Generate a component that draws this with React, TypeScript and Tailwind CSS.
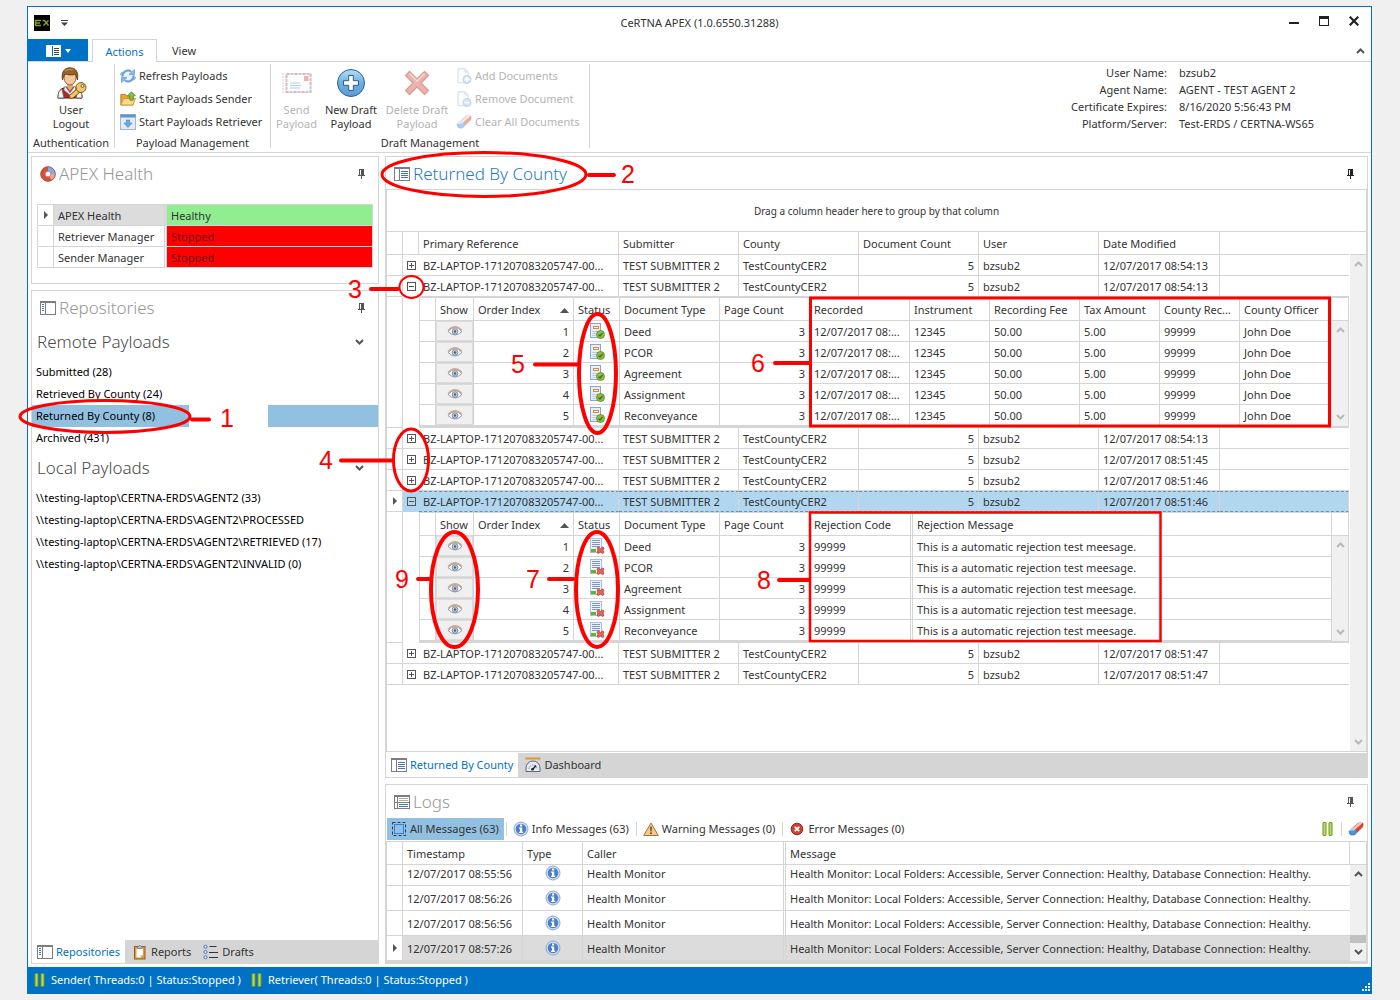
import type { ReactNode } from 'react'
import * as React from 'react'
import clsx from 'clsx'

type IconProps = { className?: string }

const UserKeyIcon = () => (
  <svg viewBox="0 0 32 32" className="size-8">
    <path d="M3 31c0-7 3-10 9-11h6c6 1 9 4 9 11z" fill="#b5242c" stroke="#4a1d16" />
    <path d="M3 31c0-5 1-8 4-9l2 9zM27 31c0-5-1-8-4-9l-2 9z" fill="#f1f1ee" stroke="#555" strokeWidth=".8" />
    <path d="M10 19l5 7 5-7 1 4-6 5-6-5z" fill="#fff" stroke="#888" strokeWidth=".7" />
    <path d="M12 15h6v5l-3 4-3-4z" fill="#e2ab78" />
    <ellipse cx="15" cy="10.500" rx="6" ry="7.500" fill="#f3c797" stroke="#7a4a22" strokeWidth=".8" />
    <path d="M7.500 13C6 4 10 .8 15 .8S24 4 22.500 13c-.8-2-1.200-4-2-6-3 1.500-7 1-10.500 0-1 2-1.800 3-2.500 6z" fill="#9a612a" stroke="#54300f" strokeWidth=".8" />
    <path d="M10 4q4-2.500 8-1" fill="none" stroke="#c98f4e" strokeWidth="1.300" />
    <g stroke="#6f4a10" strokeWidth=".9" fill="#f2c766">
      <path d="M22 22l3 3-7 6-3 .5-.5-3z" />
      <circle cx="26" cy="20.500" r="5" />
      <circle cx="27.500" cy="19" r="1.500" fill="#fff" />
    </g>
  </svg>
)

const RefreshIcon = () => (
  <svg viewBox="0 0 16 16" className="size-4">
    <circle cx="8" cy="8" r="6" fill="#e6f1fb" stroke="#a9c8e6" />
    <path d="M2.500 8.500A5.500 5.500 0 0 1 11 3.500M13.500 7.500A5.500 5.500 0 0 1 5 12.500" fill="none" stroke="#6d9fd0" strokeWidth="2" />
    <path d="M9 6.500h5.500V1.500zM7 9.500H1.500v5z" fill="#8bb8e4" stroke="#5a8dc2" strokeWidth=".6" />
    <path d="M0 7l2.500-3M16 9l-2.500 3" stroke="#8bb8e4" strokeWidth="1.600" />
  </svg>
)

const FolderUpIcon = () => (
  <svg viewBox="0 0 16 16" className="size-4">
    <path d="M.8 14V3.500h5l1.400 1.500h6V14z" fill="#e9a33a" stroke="#b8741a" strokeWidth=".8" />
    <path d="M.8 14L3.500 7.500h12L13 14z" fill="#fbd987" stroke="#c98c2b" strokeWidth=".8" />
    <path d="M11.500.8l4 4h-2.300v4.400H9.800V4.800H7.500z" fill="#7cc242" stroke="#4b8a1e" strokeWidth=".7" />
  </svg>
)

const WindowDownIcon = () => (
  <svg viewBox="0 0 16 16" className="size-4">
    <rect x=".5" y=".5" width="15" height="15" fill="#e3ebf6" stroke="#a3b6d1" />
    <rect x=".5" y=".5" width="15" height="3" fill="#5f92d2" />
    <path d="M6.500 6h3v3H12l-4 4.500L4 9h2.500z" fill="#6aaee0" stroke="#3c7fb9" strokeWidth=".6" />
  </svg>
)

const EnvelopeIcon = () => (
  <svg viewBox="0 0 32 32" className="size-8 opacity-45">
    <path d="M1 7h2M1 10h2M1 13h2M1 16h2M1 19h2M1 22h2M1 25h2" stroke="#8b95a5" />
    <rect x="5" y="6.500" width="25" height="19" fill="#f8f9fc" stroke="#b9c2d2" />
    <rect x="5.500" y="7" width="24" height="18" fill="none" stroke="#d8563f" strokeWidth="2" strokeDasharray="3 5" />
    <rect x="5.500" y="7" width="24" height="18" fill="none" stroke="#6f93c9" strokeWidth="2" strokeDasharray="3 5" strokeDashoffset="4" />
    <rect x="23" y="9" width="4.500" height="5" fill="#d9583f" />
    <path d="M9 16h10M9 18.500h11M9 21h10" stroke="#6f93c9" />
  </svg>
)

const NewDraftIcon = () => (
  <svg viewBox="0 0 32 32" className="size-8">
    <defs>
      <linearGradient id="draft" x1="0" y1="0" x2="0" y2="1">
        <stop offset="0" stopColor="#b4e0f5" />
        <stop offset=".5" stopColor="#6cafe0" />
        <stop offset="1" stopColor="#5a9cd6" />
      </linearGradient>
    </defs>
    <circle cx="16" cy="16" r="13.500" fill="url(#draft)" stroke="#2f5c93" />
    <path d="M13.700 8.500h4.600v5.200h5.200v4.600h-5.200v5.200h-4.600v-5.200H8.500v-4.600h5.200z" fill="#fff" stroke="#2f5c93" />
  </svg>
)

const DeleteDraftIcon = () => (
  <svg viewBox="0 0 32 32" className="size-8">
    <path d="M8.500 4.500L16 12l7.500-7.500 4 4L20 16l7.500 7.500-4 4L16 20l-7.500 7.500-4-4L12 16 4.500 8.500z" fill="#eab4ae" stroke="#dc9a94" strokeWidth="1.200" strokeLinejoin="round" />
    <path d="M8.500 6.500l7.500 7.500 7.500-7.500" fill="none" stroke="#f8d8d3" strokeWidth="1.500" />
  </svg>
)

const DocIcon = ({ minus }: { minus?: boolean }) => (
  <svg viewBox="0 0 16 16" className="size-4 opacity-40">
    <path d="M2 .8h7l3 3v11H2z" fill="#f4f8fd" stroke="#93aaca" />
    <path d="M9 .8v3h3" fill="none" stroke="#93aaca" />
    <circle cx="11" cy="11.500" r="4" fill="#9bbfe6" stroke="#5f8fc6" />
    <path d={minus ? 'M8.500 11.500h5' : 'M8.500 11.500h5M11 9v5'} stroke="#fff" strokeWidth="1.500" />
  </svg>
)

const EraserIcon = ({ className }: IconProps) => (
  <svg viewBox="0 0 16 16" className={clsx('size-4', className)}>
    <path d="M1 10.500L5 6.500l5 4-3.500 3.500H3q-2-1-2-3.500z" fill="#4d8fdc" stroke="#2a65b0" strokeWidth=".6" />
    <path d="M5 6.500L10.500 2h4.300q.8 2-.3 4L10 10.500z" fill="#d9452f" stroke="#a8341f" strokeWidth=".6" />
    <path d="M2 9.500L10.500 2h4L6 9.500z" fill="#f6cdbf" />
    <path d="M2 9.500l3-3 2 2-1 1z" fill="#a9cdf5" />
  </svg>
)

const GaugeRingIcon = () => (
  <svg viewBox="0 0 16 16" className="size-4">
    <circle cx="8" cy="8" r="5" fill="none" stroke="#d4513d" strokeWidth="5" />
    <path d="M8 3A5 5 0 0 1 13 8" fill="none" stroke="#7fb0e6" strokeWidth="5" />
    <path d="M13 8A5 5 0 0 1 10.500 12.300" fill="none" stroke="#eda58f" strokeWidth="5" />
    <circle cx="8" cy="8" r="7.300" fill="none" stroke="#8c4a44" strokeWidth=".7" />
    <circle cx="8" cy="8" r="2.800" fill="#fff" stroke="#9a5a50" strokeWidth=".6" />
  </svg>
)

// side: which part of the pane carries the blue lines
const PaneIcon = ({ side }: { side: 'left' | 'right' | 'full' }) => (
  <svg viewBox="0 0 16 14" className="h-3.5 w-4" shapeRendering="crispEdges">
    <path d="M0 0h16v14H0zM1 2v11h4V2zM6 2v11h9V2z" fill="#7d7d7d" fillRule="evenodd" />
    {side === 'left' && <path d="M2 3.500h2M2 5.500h2M2 7.500h2M2 9.500h2" stroke="#3f78b5" />}
    {side === 'right' && <path d="M7 4.500h7M7 6.500h7M7 8.500h7M7 10.500h7" stroke="#3f78b5" />}
    {side === 'full' && (
      <>
        <path d="M4 2h11v11H4z" fill="#fff" />
        <path d="M3.500 2v11" stroke="#7d7d7d" />
        <path d="M5 3.500h9M5 5.500h9" stroke="#aaa" />
        <path d="M1 7.500h14" stroke="#7d7d7d" />
        <path d="M5 9.500h9M5 11.500h9" stroke="#3f78b5" />
      </>
    )}
  </svg>
)

const PinIcon = ({ className }: IconProps) => (
  <svg viewBox="0 0 7 10" className={clsx('h-2.5 w-[7px]', className)} shapeRendering="crispEdges">
    <path d="M1 0h5v6h1v1H4v3H3V7H0V6h1zM2 1v5h1V1z" fill="currentColor" fillRule="evenodd" />
  </svg>
)

const Chevron = ({ up, className }: IconProps & { up?: boolean }) => (
  <svg viewBox="0 0 9 6" className={clsx('h-1.5 w-[9px]', className)}>
    <path d={up ? 'M1 5l3.500-3.500L8 5' : 'M1 1l3.500 3.500L8 1'} fill="none" stroke="currentColor" strokeWidth="2" />
  </svg>
)

const EyeIcon = () => (
  <svg viewBox="0 0 16 12" className="h-3 w-4">
    <path d="M1 6.500q7-8 14 0-7 7-14 0z" fill="#f6f8fa" stroke="#8fa1b5" strokeWidth="1" />
    <path d="M1 5.500q7-7.500 14 0" fill="none" stroke="#cda88f" strokeWidth="1.300" />
    <circle cx="8" cy="6.500" r="2.800" fill="#c3d0dc" stroke="#74889d" strokeWidth=".9" />
    <circle cx="8" cy="6.500" r="1.200" fill="#55616e" />
  </svg>
)

const AcceptedIcon = () => (
  <svg viewBox="0 0 16 16" className="size-4">
    <rect x="1.500" y=".5" width="10" height="14" fill="#e8effb" stroke="#8ba4d8" />
    <rect x="4.500" y="3.500" width="5" height="2" fill="#fff" stroke="#d98a33" />
    <path d="M3.500 8.500h6M3.500 10.500h4M3.500 12.500h3" stroke="#b4c4e4" />
    <circle cx="11.500" cy="11.500" r="4" fill="#8cc044" stroke="#568a20" strokeWidth=".8" />
    <path d="M9.500 11.500l1.500 1.500 2.500-3" fill="none" stroke="#3f6a18" strokeWidth="1.200" />
  </svg>
)

const RejectedIcon = () => (
  <svg viewBox="0 0 16 16" className="size-4">
    <rect x="1.500" y=".5" width="11" height="14" fill="#eef3fc" stroke="#a9bce2" />
    <path d="M3 2.500h8M3 4.500h8M3 6.500h8M3 8.500h8" stroke="#7f94c6" />
    <rect x="2" y="11" width="5" height="3" fill="#63b32c" />
    <path d="M8 10l1.500-1 2 1.500 2-1.500 1.500 1-1 2 1 2.500-1.500 1-2-1.500-2 1.500-1.500-1 1-2.500z" fill="#e0675c" stroke="#b8382d" strokeWidth=".8" />
  </svg>
)

const InfoIcon = () => (
  <svg viewBox="0 0 16 16" className="size-4">
    <circle cx="8" cy="8" r="7" fill="#d3e0f3" stroke="#8fa9d0" />
    <circle cx="8" cy="8" r="5.300" fill="#4c7fc8" />
    <path d="M7 3.500h2.200v2H7zM6 6.500h3.200v4.300h1V12H6v-1.200h1V7.700H6z" fill="#fff" />
  </svg>
)

const WarningIcon = () => (
  <svg viewBox="0 0 16 16" className="size-4">
    <path d="M8 2l7.300 12.500H.7z" fill="#f5c98a" stroke="#a9713a" strokeLinejoin="round" />
    <path d="M7.200 5.800h1.600l-.3 4.700h-1zM7.200 11.500h1.600v1.500H7.200z" fill="#4a3520" />
  </svg>
)

const ErrorIcon = () => (
  <svg viewBox="0 0 16 16" className="size-4">
    <circle cx="8" cy="8" r="5.800" fill="#cf3f35" stroke="#8f2820" />
    <path d="M5.800 5.800l4.400 4.400M10.200 5.800l-4.400 4.400" stroke="#fff" strokeWidth="1.800" />
  </svg>
)

const SelectAllIcon = () => (
  <svg viewBox="0 0 16 16" className="size-4">
    <rect x="1.500" y="1.500" width="13" height="13" fill="none" stroke="#1f3c62" strokeDasharray="3 2" />
    <rect x="3.500" y="3.500" width="9" height="9" fill="#8fc0f2" stroke="#3f7fc4" />
  </svg>
)

const DashboardIcon = () => (
  <svg viewBox="0 0 16 16" className="size-4">
    <path d="M.5 1.500h15" stroke="#e59430" strokeWidth="2" />
    <path d="M1 14.500V11a7 7 0 0 1 14 0v3.500z" fill="#e6ebf2" stroke="#5a6980" />
    <path d="M4 12a4 4 0 0 1 8 0" fill="none" stroke="#7d8ca3" strokeDasharray="1.500 1" />
    <path d="M7.500 12.500L11 8.500" stroke="#222" strokeWidth="1.500" />
    <circle cx="7.500" cy="12.300" r="1.300" fill="#222" />
  </svg>
)

const ReportsIcon = () => (
  <svg viewBox="0 0 16 16" className="size-4">
    <rect x="2.500" y="2.500" width="10.500" height="12.500" fill="#e09a3c" stroke="#9c5d18" />
    <path d="M4.500 4.500h6.500v6.500l-2.500 2.500h-4z" fill="#fff" />
    <path d="M5.500 4.500V2.500h1.200Q7.800-.2 8.900 2.500H10v2z" fill="#b9c6d8" stroke="#5a6c88" strokeWidth=".7" />
    <path d="M8.500 13.500V11H11z" fill="#b9c6d8" />
  </svg>
)

const DraftsIcon = () => (
  <svg viewBox="0 0 16 16" className="size-4">
    <g fill="#d6e6f7" stroke="#4a7db8">
      <circle cx="2.500" cy="2.800" r="1.600" />
      <circle cx="2.500" cy="8" r="1.600" />
      <circle cx="2.500" cy="13.200" r="1.600" />
    </g>
    <path d="M6.500 2.500h7M6 8.500h9M6 13.500h9" stroke="#333" />
  </svg>
)

const PauseIcon = () => (
  <svg viewBox="0 0 12 14" className="h-3.5 w-3">
    <rect x="1" y=".5" width="3" height="13" rx=".5" fill="#b9db5c" stroke="#6a9420" />
    <rect x="7" y=".5" width="3" height="13" rx=".5" fill="#b9db5c" stroke="#6a9420" />
  </svg>
)

const RowMarker = () => (
  <svg viewBox="0 0 4 8" className="mx-auto h-2 w-1">
    <path d="M0 0l4 4-4 4z" fill="#555" />
  </svg>
)

const SmallCommand = ({ icon, label, disabled }: { icon: ReactNode, label: string, disabled?: boolean }) => (
  <button type="button" disabled={disabled} className="flex h-[23px] items-center gap-[3px] disabled:text-[#b4b4b4]">
    {icon}
    {label}
  </button>
)

const BigCommand = ({ icon, lines, disabled, className }: { icon: ReactNode, lines: string[], disabled?: boolean, className?: string }) => (
  <button type="button" disabled={disabled} className={clsx('flex flex-col items-center pt-[3px] leading-[14px] disabled:text-[#b4b4b4]', className)}>
    <span className="mb-1">{icon}</span>
    {lines.map(line => <span key={line}>{line}</span>)}
  </button>
)

const Ribbon = () => (
  <div className="flex h-[91px] shrink-0 justify-between border-b border-[#d5d5d5] pt-0.5 pb-1">
    <div className="flex">
      <section className="flex w-[87px] flex-col items-center border-r border-[#d5d5d5] whitespace-nowrap">
        <BigCommand icon={<UserKeyIcon />} lines={['User', 'Logout']} />
        <span className="mt-auto leading-[10px]">Authentication</span>
      </section>
      <section className="flex w-[156px] flex-col border-r border-[#d5d5d5] pl-[5px] whitespace-nowrap">
        <div className="flex flex-col">
          <SmallCommand icon={<RefreshIcon />} label="Refresh Payloads" />
          <SmallCommand icon={<FolderUpIcon />} label="Start Payloads Sender" />
          <SmallCommand icon={<WindowDownIcon />} label="Start Payloads Retriever" />
        </div>
        <span className="mt-auto self-center pr-[5px] leading-[10px]">Payload Management</span>
      </section>
      <section className="flex w-[319px] flex-col border-r border-[#d5d5d5] whitespace-nowrap">
        <div className="flex">
          <BigCommand disabled icon={<EnvelopeIcon />} lines={['Send', 'Payload']} className="w-[51px]" />
          <BigCommand icon={<NewDraftIcon />} lines={['New Draft', 'Payload']} className="w-[58px]" />
          <BigCommand disabled icon={<DeleteDraftIcon />} lines={['Delete Draft', 'Payload']} className="w-[74px]" />
          <div className="flex flex-col pl-0.5">
            <SmallCommand disabled icon={<DocIcon />} label="Add Documents" />
            <SmallCommand disabled icon={<DocIcon minus />} label="Remove Document" />
            <SmallCommand disabled icon={<EraserIcon className="opacity-45" />} label="Clear All Documents" />
          </div>
        </div>
        <span className="mt-auto self-center leading-[10px]">Draft Management</span>
      </section>
    </div>
    <dl className="mr-10 grid auto-rows-[17px] grid-cols-[auto_152px] content-start gap-x-3 leading-[17px]">
      {[
        ['User Name:', 'bzsub2'],
        ['Agent Name:', 'AGENT - TEST AGENT 2'],
        ['Certificate Expires:', '8/16/2020 5:56:43 PM'],
        ['Platform/Server:', 'Test-ERDS / CERTNA-WS65'],
      ].map(([label, value]) => (
        <React.Fragment key={label}>
          <dt className="text-right">{label}</dt>
          <dd>{value}</dd>
        </React.Fragment>
      ))}
    </dl>
  </div>
)

const lightHeading = 'font-[\'Open_Sans\',\'Noto_Sans\',sans-serif] text-[17px] leading-6 font-light'

const PanelTitle = ({ icon, title, active }: { icon: ReactNode, title: string, active?: boolean }) => (
  <div className="flex h-8 shrink-0 items-center pt-0.5 pr-[13px] pl-2">
    {icon}
    <h2 className={clsx(lightHeading, 'ml-[3px]', active ? 'text-[#1f7ac9]' : 'text-[#969696]')}>{title}</h2>
    <button type="button" aria-label={`Pin ${title}`} className="ml-auto">
      <PinIcon className={active ? 'text-[#222]' : 'text-[#555]'} />
    </button>
  </div>
)

const HealthPanel = () => (
  <section className="h-32 shrink-0 border border-[#d5d5d5]">
    <PanelTitle icon={<GaugeRingIcon />} title="APEX Health" />
    <div className="px-[5px] pt-[15px]">
      <table className="w-full table-fixed border-separate border-spacing-0 border-t border-l border-[#d5d5d5]">
        <colgroup>
          <col className="w-4" />
          <col className="w-[113px]" />
          <col />
        </colgroup>
        <tbody>
          {['APEX Health', 'Retriever Manager', 'Sender Manager'].map((name, i) => (
            <tr key={name} className="h-[21px]">
              <td className="border-r border-b border-[#d5d5d5]">{i === 0 && <RowMarker />}</td>
              <td className={clsx('border-r-[3px] border-b border-double border-[#d5d5d5] pt-0.5 pl-1 whitespace-nowrap', i === 0 && 'bg-[#dcdcdc]')}>{name}</td>
              <td className={clsx('border-r border-b border-[#d5d5d5] pt-0.5 pl-1', i === 0 ? 'bg-[#90ee90]' : 'bg-[#ff0000] text-[#6e1414]')}>
                {i === 0 ? 'Healthy' : 'Stopped'}
              </td>
            </tr>
          ))}
        </tbody>
      </table>
    </div>
  </section>
)

const groups = [
  { title: 'Remote Payloads', items: ['Submitted (28)', 'Retrieved By County (24)', 'Returned By County (8)', 'Archived (431)'] },
  {
    title: 'Local Payloads',
    items: [
      '\\\\testing-laptop\\CERTNA-ERDS\\AGENT2 (33)',
      '\\\\testing-laptop\\CERTNA-ERDS\\AGENT2\\PROCESSED',
      '\\\\testing-laptop\\CERTNA-ERDS\\AGENT2\\RETRIEVED (17)',
      '\\\\testing-laptop\\CERTNA-ERDS\\AGENT2\\INVALID (0)',
    ],
  },
]

const Tab = ({ icon, label, active }: { icon: ReactNode, label: string, active?: boolean }) => (
  <button type="button" className={clsx('flex h-full items-center gap-[3px] px-[5px]', active && 'bg-white text-[#0072c6]')}>
    {icon}
    {label}
  </button>
)

const RepositoriesPanel = () => (
  <section className="flex min-h-0 flex-1 flex-col border border-[#d5d5d5]">
    <PanelTitle icon={<PaneIcon side="left" />} title="Repositories" />
    {groups.map(group => (
      <div key={group.title}>
        <div className="flex h-[38px] items-center justify-between pr-3.5 pl-[5px]">
          <h3 className={clsx(lightHeading, 'text-[#4a4a4a]')}>{group.title}</h3>
          <Chevron className="text-[#555]" />
        </div>
        <ul className="text-black">
          {group.items.map((item) => {
            const selected = item.startsWith('Returned')
            return (
              <li key={item} className="flex h-[22px] justify-between">
                <button type="button" className={clsx('w-[157px] pl-1 text-left whitespace-nowrap', selected && 'bg-[#92c0e0]')}>{item}</button>
                {selected && <span className="w-[110px] bg-[#92c0e0]" />}
              </li>
            )
          })}
        </ul>
      </div>
    ))}
    <nav className="mt-auto flex h-[23px] gap-0.5 bg-[#d5d5d5]">
      <Tab active icon={<PaneIcon side="left" />} label="Repositories" />
      <Tab icon={<ReportsIcon />} label="Reports" />
      <Tab icon={<DraftsIcon />} label="Drafts" />
    </nav>
  </section>
)

const Scrollbar = ({ className }: IconProps) => (
  <div className={clsx('flex flex-1 flex-col items-center justify-between bg-[#f0f0f0] py-1.5', className)}>
    <Chevron up />
    <Chevron />
  </div>
)

const cell = 'overflow-hidden whitespace-nowrap border-r border-b border-[#d5d5d5] px-1 pt-0.5'

const recordedColumns: [string, string, string][] = [
  ['Recorded', '12/07/2017 08:...', 'w-[100px]'],
  ['Instrument', '12345', 'w-[80px]'],
  ['Recording Fee', '50.00', 'w-[90px]'],
  ['Tax Amount', '5.00', 'w-[80px]'],
  ['County Rec...', '99999', 'w-[80px]'],
  ['County Officer', 'John Doe', ''],
]

const rejectedColumns: [string, string, string][] = [
  ['Rejection Code', '99999', 'w-[103px]'],
  ['Rejection Message', 'This is a automatic rejection test meesage.', ''],
]

const DetailGrid = ({ rejected }: { rejected?: boolean }) => {
  const extra = rejected ? rejectedColumns : recordedColumns
  const extraCell = (i: number) => clsx(cell, rejected && i === 0 && 'border-r-[3px] [border-right-style:double]')
  return (
    <div className="flex border-t border-r border-b-2 border-l border-[#d5d5d5]">
      <table className="w-full table-fixed border-separate border-spacing-0">
        <colgroup>
          <col className="w-4" />
          <col className="w-[38px]" />
          <col className="w-[100px]" />
          <col className="w-[46px]" />
          <col className="w-[100px]" />
          <col className="w-[90px]" />
          {extra.map(([name,, width]) => <col key={name} className={width} />)}
        </colgroup>
        <thead>
          <tr className="h-[23px] text-left">
            <td className={cell} />
            <th className={cell}>Show</th>
            <th className={cell}>
              <span className="flex items-center justify-between">
                Order Index
                <svg viewBox="0 0 9 5" className="h-[5px] w-[9px]"><path d="M0 5l4.500-5L9 5z" fill="#555" /></svg>
              </span>
            </th>
            <th className={cell}>Status</th>
            <th className={cell}>Document Type</th>
            <th className={cell}>Page Count</th>
            {extra.map(([name], i) => <th key={name} className={extraCell(i)}>{name}</th>)}
          </tr>
        </thead>
        <tbody>
          {['Deed', 'PCOR', 'Agreement', 'Assignment', 'Reconveyance'].map((type, row) => (
            <tr key={type} className="h-[21px]">
              <td className={cell} />
              <td className="border-r border-b border-[#d5d5d5] p-0">
                <button type="button" aria-label={`Show ${type}`} className="flex h-5 w-full items-center justify-center border border-[#dcdcdc] bg-[#f0f0f0]">
                  <EyeIcon />
                </button>
              </td>
              <td className={clsx(cell, 'text-right')}>{row + 1}</td>
              <td className="border-r border-b border-[#d5d5d5] p-0">
                <span className="flex justify-center">{rejected ? <RejectedIcon /> : <AcceptedIcon />}</span>
              </td>
              <td className={cell}>{type}</td>
              <td className={clsx(cell, 'text-right')}>3</td>
              {extra.map(([name, value], i) => <td key={name} className={extraCell(i)}>{value}</td>)}
            </tr>
          ))}
        </tbody>
      </table>
      <div className="flex w-4 shrink-0 flex-col text-[#b9b9b9]">
        <div className="h-[23px] border-b border-[#d5d5d5]" />
        <Scrollbar />
      </div>
    </div>
  )
}

type Payload = { time: string, detail?: 'recorded' | 'rejected', selected?: boolean }

const payloads: Payload[] = [
  { time: '08:54:13' },
  { time: '08:54:13', detail: 'recorded' },
  { time: '08:54:13' },
  { time: '08:51:45' },
  { time: '08:51:46' },
  { time: '08:51:46', detail: 'rejected', selected: true },
  { time: '08:51:47' },
  { time: '08:51:47' },
]

const PayloadRow = ({ time, detail, selected }: Payload) => {
  const dataCell = selected
    ? 'overflow-hidden whitespace-nowrap border-y border-r border-dashed border-y-[#6f8ea6] border-r-[#d5d5d5] [border-right-style:solid] px-1'
    : cell
  return (
    <>
      <tr className={clsx('h-[21px]', selected && 'bg-[#b1d6f0]')}>
        <td className="border-r border-b border-[#d5d5d5] bg-white">{selected && <RowMarker />}</td>
        <td className={clsx('border-[#d5d5d5]', !detail && 'border-b')}>
          <button type="button" aria-label={detail ? 'Collapse' : 'Expand'} className="mx-auto block">
            <svg viewBox="0 0 9 9" className="size-[9px]" shapeRendering="crispEdges">
              <path d="M0 0h9v9H0zM1 1v7h7V1z" fill="#555" fillRule="evenodd" />
              <path d={detail ? 'M2 4h5v1H2z' : 'M2 4h5v1H2zM4 2h1v5H4z'} fill="#555" />
            </svg>
          </button>
        </td>
        <td className={dataCell}>BZ-LAPTOP-171207083205747-00...</td>
        <td className={dataCell}>TEST SUBMITTER 2</td>
        <td className={dataCell}>TestCountyCER2</td>
        <td className={clsx(dataCell, 'text-right')}>5</td>
        <td className={dataCell}>bzsub2</td>
        <td className={dataCell}>{`12/07/2017 ${time}`}</td>
        <td className={clsx(dataCell, !selected && 'border-r-0')} />
      </tr>
      {detail && (
        <tr>
          <td className="border-r border-b border-[#d5d5d5]" />
          <td />
          <td colSpan={7} className="p-0">
            <DetailGrid rejected={detail === 'rejected'} />
          </td>
        </tr>
      )}
    </>
  )
}

const ReturnedPanel = () => (
  <section className="flex min-h-0 flex-1 flex-col border border-[#d5d5d5]">
    <PanelTitle active icon={<PaneIcon side="right" />} title="Returned By County" />
    <div className="flex min-h-0 flex-1 flex-col border border-[#d5d5d5]">
      <div className="flex h-[42px] shrink-0 items-center justify-center border-b border-[#d5d5d5] text-[10px]">
        Drag a column header here to group by that column
      </div>
      <div className="flex min-h-0 flex-1">
        <div className="min-w-0 flex-1 overflow-hidden pr-px">
          <table className="w-full table-fixed border-separate border-spacing-0">
            <colgroup>
              <col className="w-4" />
              <col className="w-4" />
              <col className="w-[200px]" />
              <col className="w-[120px]" />
              <col className="w-[120px]" />
              <col className="w-[120px]" />
              <col className="w-[120px]" />
              <col className="w-[121px]" />
              <col />
            </colgroup>
            <thead>
              <tr className="h-[23px] text-left">
                <td className={cell} />
                <td className={cell} />
                {['Primary Reference', 'Submitter', 'County', 'Document Count', 'User', 'Date Modified'].map(name => (
                  <th key={name} className={cell}>{name}</th>
                ))}
                <td className="border-b border-[#d5d5d5]" />
              </tr>
            </thead>
            <tbody>
              {payloads.map((payload, i) => <PayloadRow key={i} {...payload} />)}
            </tbody>
          </table>
        </div>
        <div className="flex w-4 shrink-0 flex-col text-[#b9b9b9]">
          <div className="h-[23px] border-b border-[#d5d5d5]" />
          <Scrollbar />
        </div>
      </div>
    </div>
    <nav className="mt-px flex h-6 shrink-0 gap-0.5 bg-[#d5d5d5]">
      <Tab active icon={<PaneIcon side="right" />} label="Returned By County" />
      <Tab icon={<DashboardIcon />} label="Dashboard" />
    </nav>
  </section>
)

const LogColumns = () => (
  <colgroup>
    <col className="w-4" />
    <col className="w-[120px]" />
    <col className="w-[60px]" />
    <col className="w-[203px]" />
    <col />
  </colgroup>
)

const filterButton = 'flex h-[22px] items-center gap-[3px] pr-[5px] pl-1'
const separator = 'mx-0.5 h-3.5 w-px bg-[#d5d5d5]'

const LogsPanel = () => (
  <section className="flex h-[180px] shrink-0 flex-col border border-[#d5d5d5]">
    <PanelTitle icon={<PaneIcon side="full" />} title="Logs" />
    <div className="flex h-6 shrink-0 items-center pl-px">
      <button type="button" className={clsx(filterButton, 'bg-[#92c0e0]')}>
        <SelectAllIcon />
        All Messages (63)
      </button>
      <span className={separator} />
      <button type="button" className={filterButton}>
        <InfoIcon />
        Info Messages (63)
      </button>
      <span className={separator} />
      <button type="button" className={filterButton}>
        <WarningIcon />
        Warning Messages (0)
      </button>
      <span className={separator} />
      <button type="button" className={filterButton}>
        <ErrorIcon />
        Error Messages (0)
      </button>
      <button type="button" aria-label="Pause log" className="ml-auto"><PauseIcon /></button>
      <span className="mr-1.5 ml-[7px] h-3.5 w-px bg-[#d5d5d5]" />
      <button type="button" aria-label="Clear log" className="mr-[3px]"><EraserIcon /></button>
    </div>
    <div className="flex min-h-0 flex-1 border border-b-2 border-[#d5d5d5]">
      <div className="flex min-w-0 flex-1 flex-col">
        <table className="w-full table-fixed border-separate border-spacing-0">
          <LogColumns />
          <thead>
            <tr className="h-[23px] text-left">
              <td className={cell} />
              <th className={cell}>Timestamp</th>
              <th className={cell}>Type</th>
              <th className={clsx(cell, 'border-r-[3px] [border-right-style:double]')}>Caller</th>
              <th className={cell}>Message</th>
            </tr>
          </thead>
        </table>
        <div className="flex min-h-0 flex-1 flex-col justify-end overflow-hidden">
          <table className="w-full shrink-0 table-fixed border-separate border-spacing-0">
            <LogColumns />
            <tbody>
              {['08:55:56', '08:56:26', '08:56:56', '08:57:26'].map((time, i) => (
                <tr key={time} className={clsx('h-[25px]', i === 3 && 'bg-[#dcdcdc]')}>
                  <td className="border-r border-b border-[#d5d5d5] bg-white">{i === 3 && <RowMarker />}</td>
                  <td className={cell}>{`12/07/2017 ${time}`}</td>
                  <td className="border-r border-b border-[#d5d5d5]"><span className="flex justify-center"><InfoIcon /></span></td>
                  <td className={clsx(cell, 'border-r-[3px] [border-right-style:double]')}>Health Monitor</td>
                  <td className={clsx(cell, 'border-r-0')}>Health Monitor: Local Folders: Accessible, Server Connection: Healthy, Database Connection: Healthy.</td>
                </tr>
              ))}
            </tbody>
          </table>
        </div>
      </div>
      <div className="flex w-4 shrink-0 flex-col text-[#555]">
        <div className="h-[23px] border-b border-[#d5d5d5]" />
        <div className="flex flex-1 flex-col items-center bg-[#f0f0f0] py-1.5">
          <Chevron up />
          <span className="mt-auto mb-1.5 h-2 w-4 bg-[#c0c0c0]" />
          <Chevron />
        </div>
      </div>
    </div>
  </section>
)

// Red call-outs drawn on top of the window
const Callouts = () => (
  <svg className="pointer-events-none absolute inset-0 size-full" fill="none" stroke="#ff0000" strokeWidth="3" strokeLinecap="round">
    <ellipse cx="105" cy="416.500" rx="85" ry="16" />
    <ellipse cx="484" cy="174.500" rx="102" ry="22" />
    <ellipse cx="411.500" cy="287" rx="12" ry="11" strokeWidth="2" />
    <ellipse cx="411" cy="460" rx="17.500" ry="31" />
    <ellipse cx="597.500" cy="373.500" rx="18.500" ry="59.500" strokeWidth="4" />
    <rect x="810.500" y="298" width="519" height="128" />
    <ellipse cx="597" cy="589.500" rx="21" ry="57.500" strokeWidth="4" />
    <rect x="810" y="512.500" width="350.500" height="128.500" strokeWidth="2.500" />
    <ellipse cx="454.500" cy="589.500" rx="23.500" ry="57.500" strokeWidth="4" />
    <path strokeWidth="4" d="M192 419.500h17M589 175h25M371 289h27M341 460.500h51M535 364.500h42M775 363h34M549 579h24M779 580h30M418 579h12" />
    <g fill="#ff0000" stroke="none" className="font-['Liberation_Sans',sans-serif] text-[25px]">
      <text x="220" y="427">1</text>
      <text x="621" y="183">2</text>
      <text x="348" y="298">3</text>
      <text x="319" y="469">4</text>
      <text x="511" y="373">5</text>
      <text x="751" y="372">6</text>
      <text x="526" y="588">7</text>
      <text x="757" y="589">8</text>
      <text x="395" y="588">9</text>
    </g>
  </svg>
)

const App: React.FC = () => (
  <div className="relative h-screen bg-[#f0f0f0] pt-1.5 pr-7 pb-1.5 pl-[27px] font-['Noto_Sans',sans-serif] text-[11px] leading-4 text-[#333] [&_th]:font-normal">
    <div className="flex h-full flex-col overflow-hidden border border-[#0072c6] bg-white">
      <header className="flex h-8 shrink-0 items-center">
        <div className="flex w-32 items-center gap-[11px] pl-1.5">
          <svg viewBox="0 0 16 16" className="size-4">
            <rect width="16" height="16" fill="#000" />
            <path d="M7 5.500H1.500v5H7M1.500 8H6M8.500 5.500h2l4 5M14.500 5.500l-5 5" fill="none" stroke="#7f9d2f" strokeWidth="1.500" />
          </svg>
          <button type="button" aria-label="Customize toolbar">
            <svg viewBox="0 0 7 6" className="h-1.5 w-[7px]"><path d="M0 0h7v1H0zM0 2.500h7L3.500 6z" fill="#444" /></svg>
          </button>
        </div>
        <h1 className="flex-1 text-center">CeRTNA APEX (1.0.6550.31288)</h1>
        <div className="flex w-32 items-center justify-end gap-5 pr-3 pb-1">
          <button type="button" aria-label="Minimize"><svg viewBox="0 0 10 10" className="size-2.5"><path d="M0 6h10v2H0z" fill="#222" /></svg></button>
          <button type="button" aria-label="Maximize"><svg viewBox="0 0 10 10" className="size-2.5"><path d="M0 0h10v10H0zM1 3v6h8V3z" fill="#222" fillRule="evenodd" /></svg></button>
          <button type="button" aria-label="Close"><svg viewBox="0 0 10 10" className="size-2.5"><path d="M.7.700l8.600 8.600M9.300.700L.7 9.300" stroke="#222" strokeWidth="2.200" /></svg></button>
        </div>
      </header>

      <div className="flex h-[23px] shrink-0 items-stretch">
        <button type="button" aria-label="File" className="flex w-[60px] items-center justify-center gap-1 border-b border-[#d5d5d5] bg-[#0072c6] pt-0.5">
          <svg viewBox="0 0 15 12" className="h-3 w-[15px]" shapeRendering="crispEdges">
            <path d="M0 0h15v12H0z" fill="#fff" />
            <path d="M6 1h1v10H6z" fill="#0072c6" />
            <path d="M8 3.500h5M8 5.500h5M8 7.500h5M8 9.500h5" stroke="#444" />
          </svg>
          <svg viewBox="0 0 6 4" className="h-1 w-1.5"><path d="M0 0h6L3 4z" fill="#fff" /></svg>
        </button>
        <span className="w-1 border-b border-[#d5d5d5]" />
        <button type="button" className="w-[65px] border-x border-t border-[#d5d5d5] pt-0.5 text-[#0072c6]">Actions</button>
        <button type="button" className="w-[54px] border-b border-[#d5d5d5] pt-0.5">View</button>
        <div className="flex flex-1 items-center justify-end border-b border-[#d5d5d5] pt-0.5 pr-1.5">
          <button type="button" aria-label="Collapse ribbon"><Chevron up className="text-[#555]" /></button>
        </div>
      </div>

      <Ribbon />

      <main className="flex min-h-0 flex-1 gap-1.5 p-[3px]">
        <aside className="flex w-[348px] shrink-0 flex-col gap-1.5">
          <HealthPanel />
          <RepositoriesPanel />
        </aside>
        <div className="flex min-w-0 flex-1 flex-col gap-1.5">
          <ReturnedPanel />
          <LogsPanel />
        </div>
      </main>

      <footer className="flex h-[26px] shrink-0 items-center gap-[5px] bg-[#0072c6] pl-1.5 text-white">
        <PauseIcon />
        <span className="mr-[5px]">Sender( Threads:0 | Status:Stopped )</span>
        <PauseIcon />
        <span>Retriever( Threads:0 | Status:Stopped )</span>
        <svg viewBox="0 0 8 8" className="mr-px mb-0.5 ml-auto size-2 self-end" shapeRendering="crispEdges">
          <path d="M6 0h2v2H6zM3 3h2v2H3zM6 3h2v2H6zM0 6h2v2H0zM3 6h2v2H3zM6 6h2v2H6z" fill="#fff" />
        </svg>
      </footer>
    </div>
    <Callouts />
  </div>
)

export default App
